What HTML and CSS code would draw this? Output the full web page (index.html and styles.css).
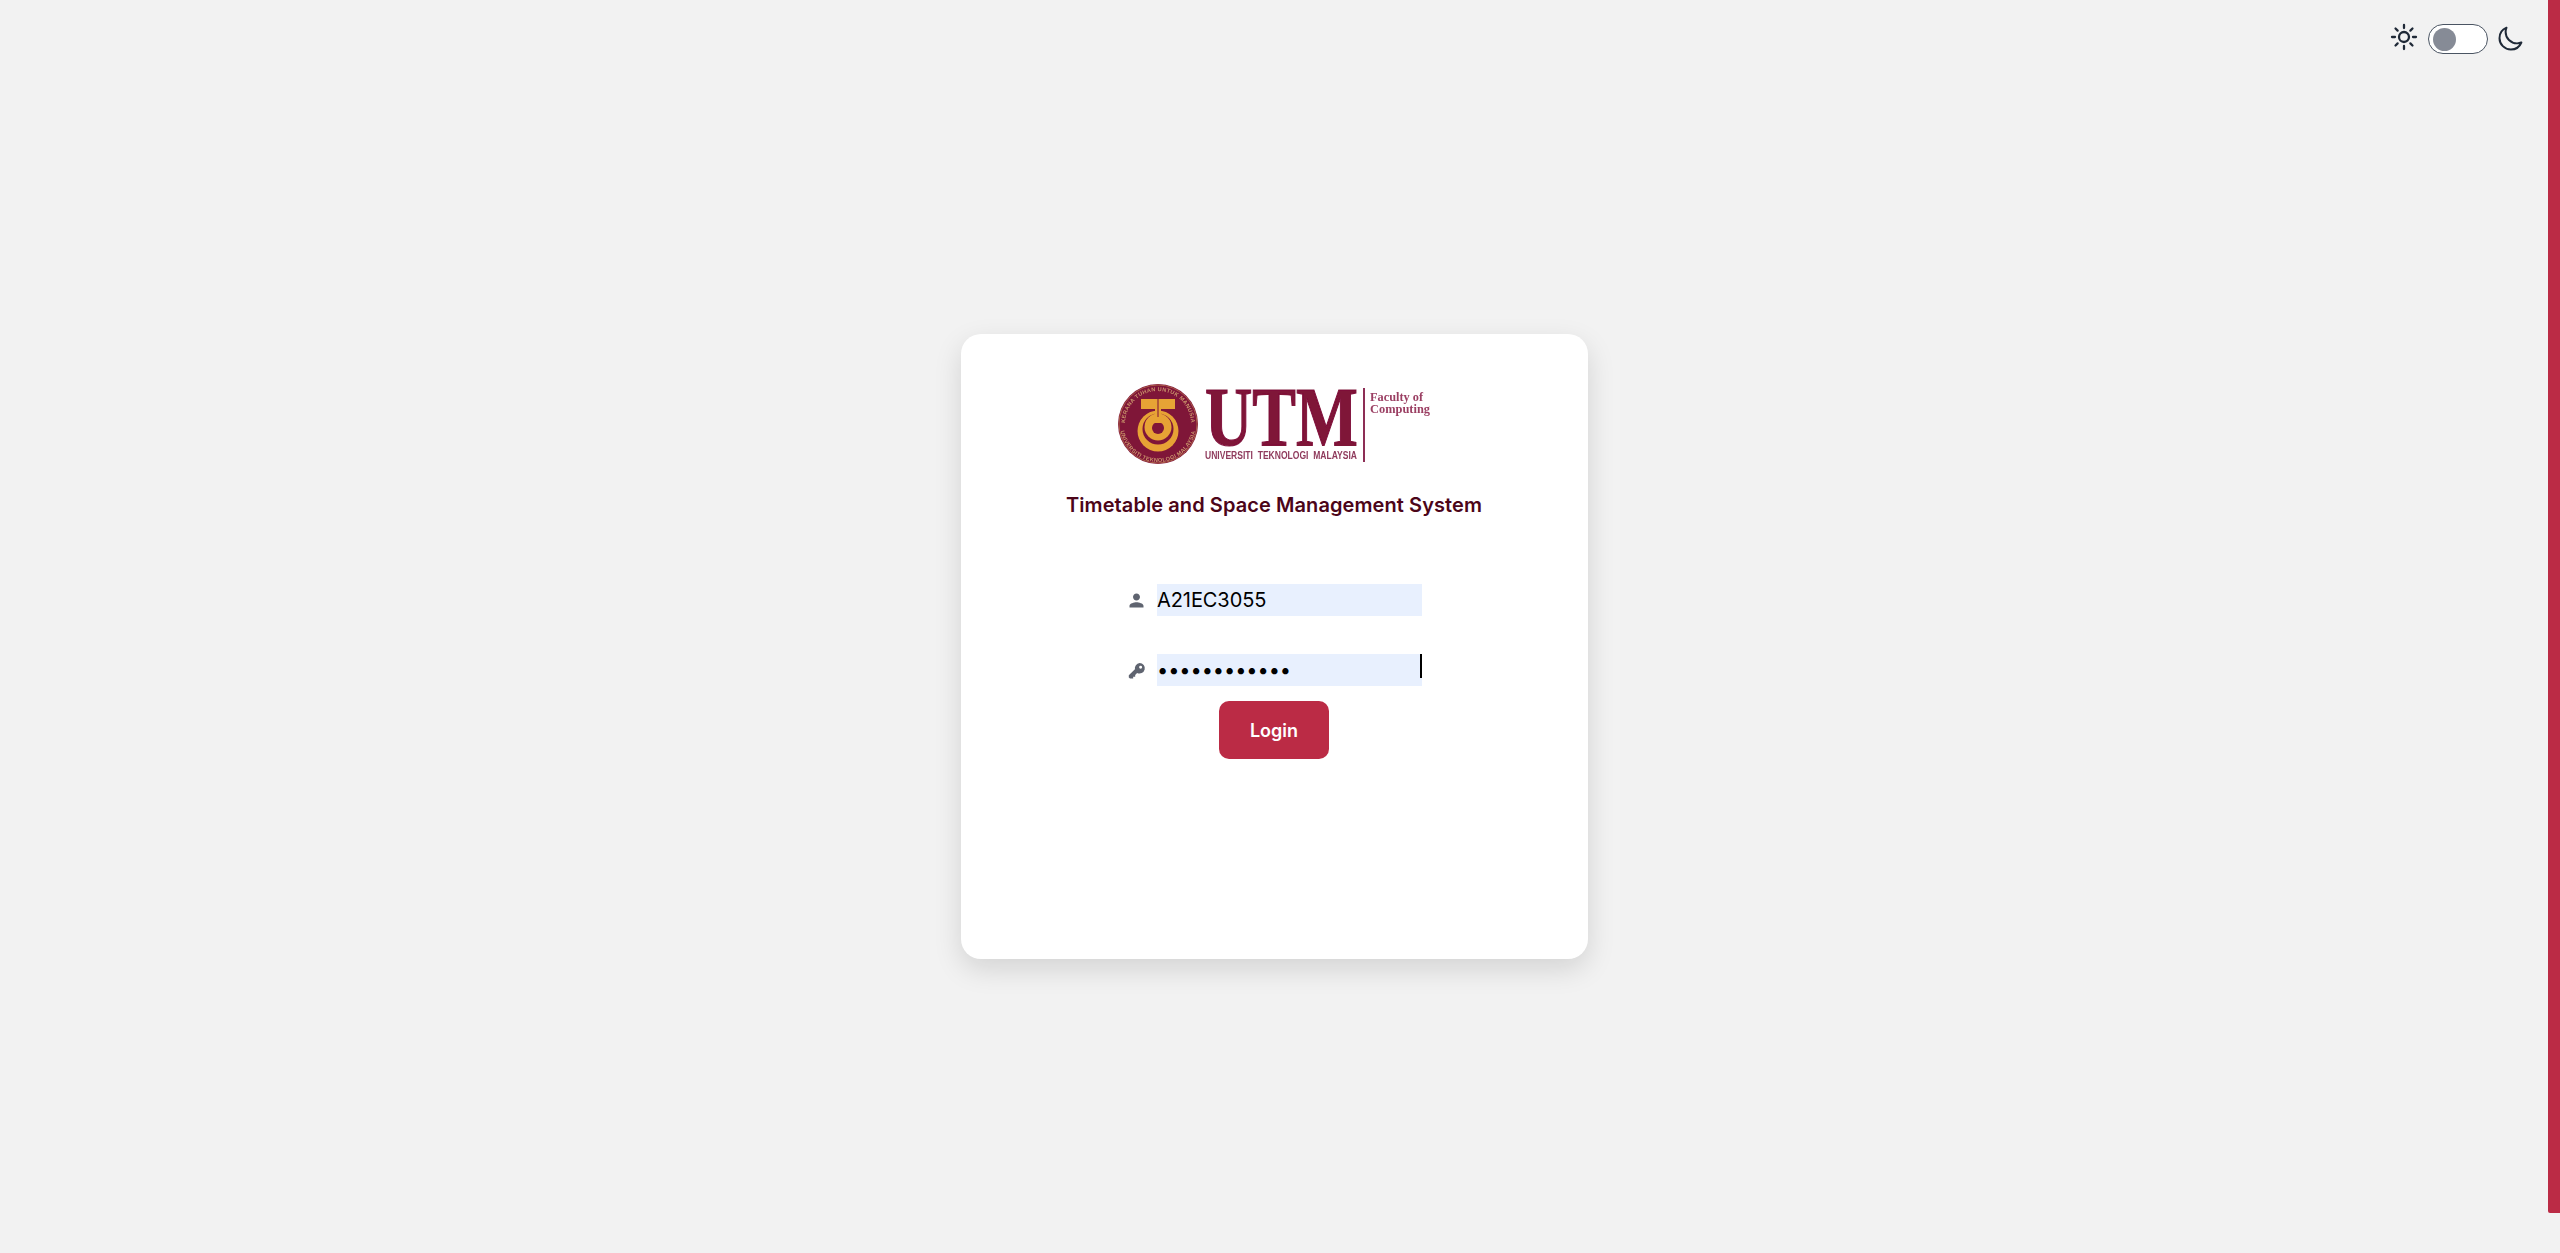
FILE: index.html
```html
<!DOCTYPE html>
<html lang="en">
<head>
<meta charset="utf-8">
<title>Timetable and Space Management System</title>
<link rel="stylesheet" href="styles.css">
</head>
<body>
<div class="scroll-thumb"></div>
<div class="theme">
  <svg class="theme-icon sun" viewBox="0 0 24 24"><path d="M12 3v2.25m6.364.386l-1.591 1.591M21 12h-2.25m-.386 6.364l-1.591-1.591M12 18.75V21m-4.773-4.227l-1.591 1.591M5.25 12H3m4.227-4.773L5.636 5.636M15.75 12a3.75 3.75 0 11-7.5 0 3.75 3.75 0 017.5 0z"/></svg>
  <div class="toggle"><span class="knob"></span></div>
  <svg class="theme-icon" viewBox="0 0 24 24"><path d="M21.752 15.002A9.718 9.718 0 0118 15.75c-5.385 0-9.75-4.365-9.75-9.75 0-1.33.266-2.597.748-3.752A9.753 9.753 0 003 11.25C3 16.635 7.365 21 12.75 21a9.753 9.753 0 009.002-5.998z"/></svg>
</div>
<main class="page">
  <section class="card">
    <svg class="logo" viewBox="1116 382 316 84">
      <defs>
        <filter id="soft" x="-5%" y="-5%" width="110%" height="110%"><feGaussianBlur stdDeviation="0.45"/></filter>
        <path id="arcTop" d="M1125 424a33 33 0 0 1 66 0"/>
        <path id="arcBottom" d="M1120 424a38 38 0 0 0 76 0"/>
      </defs>
      <g filter="url(#soft)">
        <circle cx="1158" cy="424" r="40" fill="#7f1239"/>
        <circle cx="1158" cy="424" r="39" fill="none" stroke="#b5704a" stroke-width="0.8"/>
        <text class="seal-text"><textPath href="#arcTop" startOffset="50%" text-anchor="middle">KERANA TUHAN UNTUK MANUSIA</textPath></text>
        <text class="seal-text"><textPath href="#arcBottom" startOffset="50%" text-anchor="middle">UNIVERSITI TEKNOLOGI MALAYSIA</textPath></text>
        <circle cx="1158" cy="431" r="20.5" fill="#e7a335"/>
        <circle cx="1158" cy="429" r="15.5" fill="#7f1239"/>
        <circle cx="1158" cy="427" r="13.5" fill="#e7a335"/>
        <circle cx="1158" cy="428" r="6" fill="#7f1239"/>
        <rect x="1141" y="399" width="34" height="10" fill="#e7a335"/>
        <rect x="1155" y="405" width="6" height="18" fill="#e7a335"/>
        <rect x="1157.5" y="399" width="1" height="18" fill="#7f1239"/>
        <text class="logo-utm" x="1205" y="446" textLength="153" lengthAdjust="spacingAndGlyphs">UTM</text>
        <text class="logo-sub" x="1205" y="458.500" textLength="152" lengthAdjust="spacingAndGlyphs">UNIVERSITI TEKNOLOGI MALAYSIA</text>
        <rect x="1363" y="388" width="2" height="74" fill="#8d2f54"/>
        <text class="logo-fac" x="1370" y="401" textLength="53" lengthAdjust="spacingAndGlyphs">Faculty of</text>
        <text class="logo-fac" x="1370" y="413" textLength="60" lengthAdjust="spacingAndGlyphs">Computing</text>
      </g>
    </svg>
    <h1 class="title">Timetable and Space Management System</h1>
    <form class="form">
      <label class="field">
        <svg class="field-icon" viewBox="0 0 24 24"><path d="M12 12c2.21 0 4-1.79 4-4s-1.79-4-4-4-4 1.79-4 4 1.79 4 4 4zm0 2c-2.67 0-8 1.34-8 4v2h16v-2c0-2.66-5.33-4-8-4z"/></svg>
        <input class="input" type="text" value="A21EC3055">
      </label>
      <label class="field">
        <svg class="field-icon" viewBox="0 0 24 24"><path fill-rule="evenodd" d="M15.500 3.500a6 6 0 1 1-2.800 11.300L10.500 17V19.200H8.200v2H4.600L3.200 19.900v-2.400l7-6.900A6 6 0 0 1 15.500 3.500zm1.200 3.200a1.700 1.700 0 1 0 0 3.400 1.700 1.700 0 0 0 0-3.400z"/></svg>
        <span class="input-wrap">
          <input class="input" type="password" value="abcdefghijkl">
          <span class="caret"></span>
        </span>
      </label>
      <button class="login" type="button">Login</button>
    </form>
  </section>
</main>
</body>
</html>
```
FILE: styles.css
```css
* { box-sizing: border-box; }
html { background: #f2f2f2; }
body {
  margin: 0;
  height: 1253px;
  overflow: hidden;
  position: relative;
  font-family: Inter, "Liberation Sans", sans-serif;
  background: #f2f2f2;
}
.scroll-thumb {
  position: absolute;
  top: 0;
  right: 0;
  width: 12px;
  height: 1213px;
  background: #bb2b45;
  border-bottom-left-radius: 2px;
}
.page {
  height: 1253px;
  padding: 334px 12px 0 0;
  display: flex;
  align-items: flex-start;
  justify-content: center;
}
.card {
  width: 627px;
  height: 625px;
  padding-top: 48px;
  background: #fff;
  border-radius: 20px;
  box-shadow: 0 10px 28px rgba(0, 0, 0, 0.13);
  display: flex;
  flex-direction: column;
  align-items: center;
}
.logo { width: 316px; height: 84px; display: block; }
.seal-text { font: 700 5.6px "Liberation Sans", sans-serif; fill: #c9966a; letter-spacing: 0.3px; }
.logo-utm { font: 700 84px "Liberation Serif", serif; fill: #7f1239; stroke: #7f1239; stroke-width: 1.2px; }
.logo-sub { font: 700 11px "Liberation Sans", sans-serif; word-spacing: 3px; fill: #8f3a5c; }
.logo-fac { font: 700 12px "Liberation Serif", serif; fill: #9b3f63; }
.title {
  margin: 25px 0 0;
  font-size: 20px;
  line-height: 28px;
  font-weight: 600;
  letter-spacing: 0.08px;
  color: #4c0519;
}
.form {
  margin-top: 65px;
  display: flex;
  flex-direction: column;
  align-items: center;
}
.field {
  display: flex;
  align-items: center;
  gap: 10px;
  margin-bottom: 38px;
}
.field:nth-of-type(2) { margin-bottom: 15px; }
.field-icon { width: 21px; height: 21px; fill: #5f6470; flex: none; }
.input-wrap { position: relative; display: block; }
.input {
  display: block;
  width: 265px;
  height: 32px;
  padding: 0 0 1px;
  border: 0;
  outline: 0;
  background: #e8f0fe;
  font-family: Inter, sans-serif;
  font-size: 20px;
  letter-spacing: -0.08px;
  color: #000;
}
.caret {
  position: absolute;
  top: 0;
  right: 0;
  width: 2px;
  height: 24px;
  background: #000;
}
.login {
  width: 110px;
  height: 58px;
  border: 0;
  border-radius: 10px;
  background: #bb2b45;
  color: #fff;
  font-family: Inter, sans-serif;
  font-size: 18px;
  font-weight: 600;
}
.theme {
  position: absolute;
  top: 24px;
  right: 36px;
  display: flex;
  align-items: center;
  gap: 8px;
}
.theme-icon {
  width: 28px;
  height: 28px;
  fill: none;
  stroke: #1f2937;
  stroke-width: 1.7;
  stroke-linecap: round;
  stroke-linejoin: round;
  flex: none;
}
.sun { width: 32px; height: 32px; margin-top: -4px; }
.toggle {
  width: 60px;
  height: 30px;
  padding: 2px 4px;
  background: #fff;
  border: 1.5px solid #4b5563;
  border-radius: 15px;
  display: flex;
  align-items: center;
}
.knob { width: 23px; height: 23px; border-radius: 50%; background: #868b96; }
```
